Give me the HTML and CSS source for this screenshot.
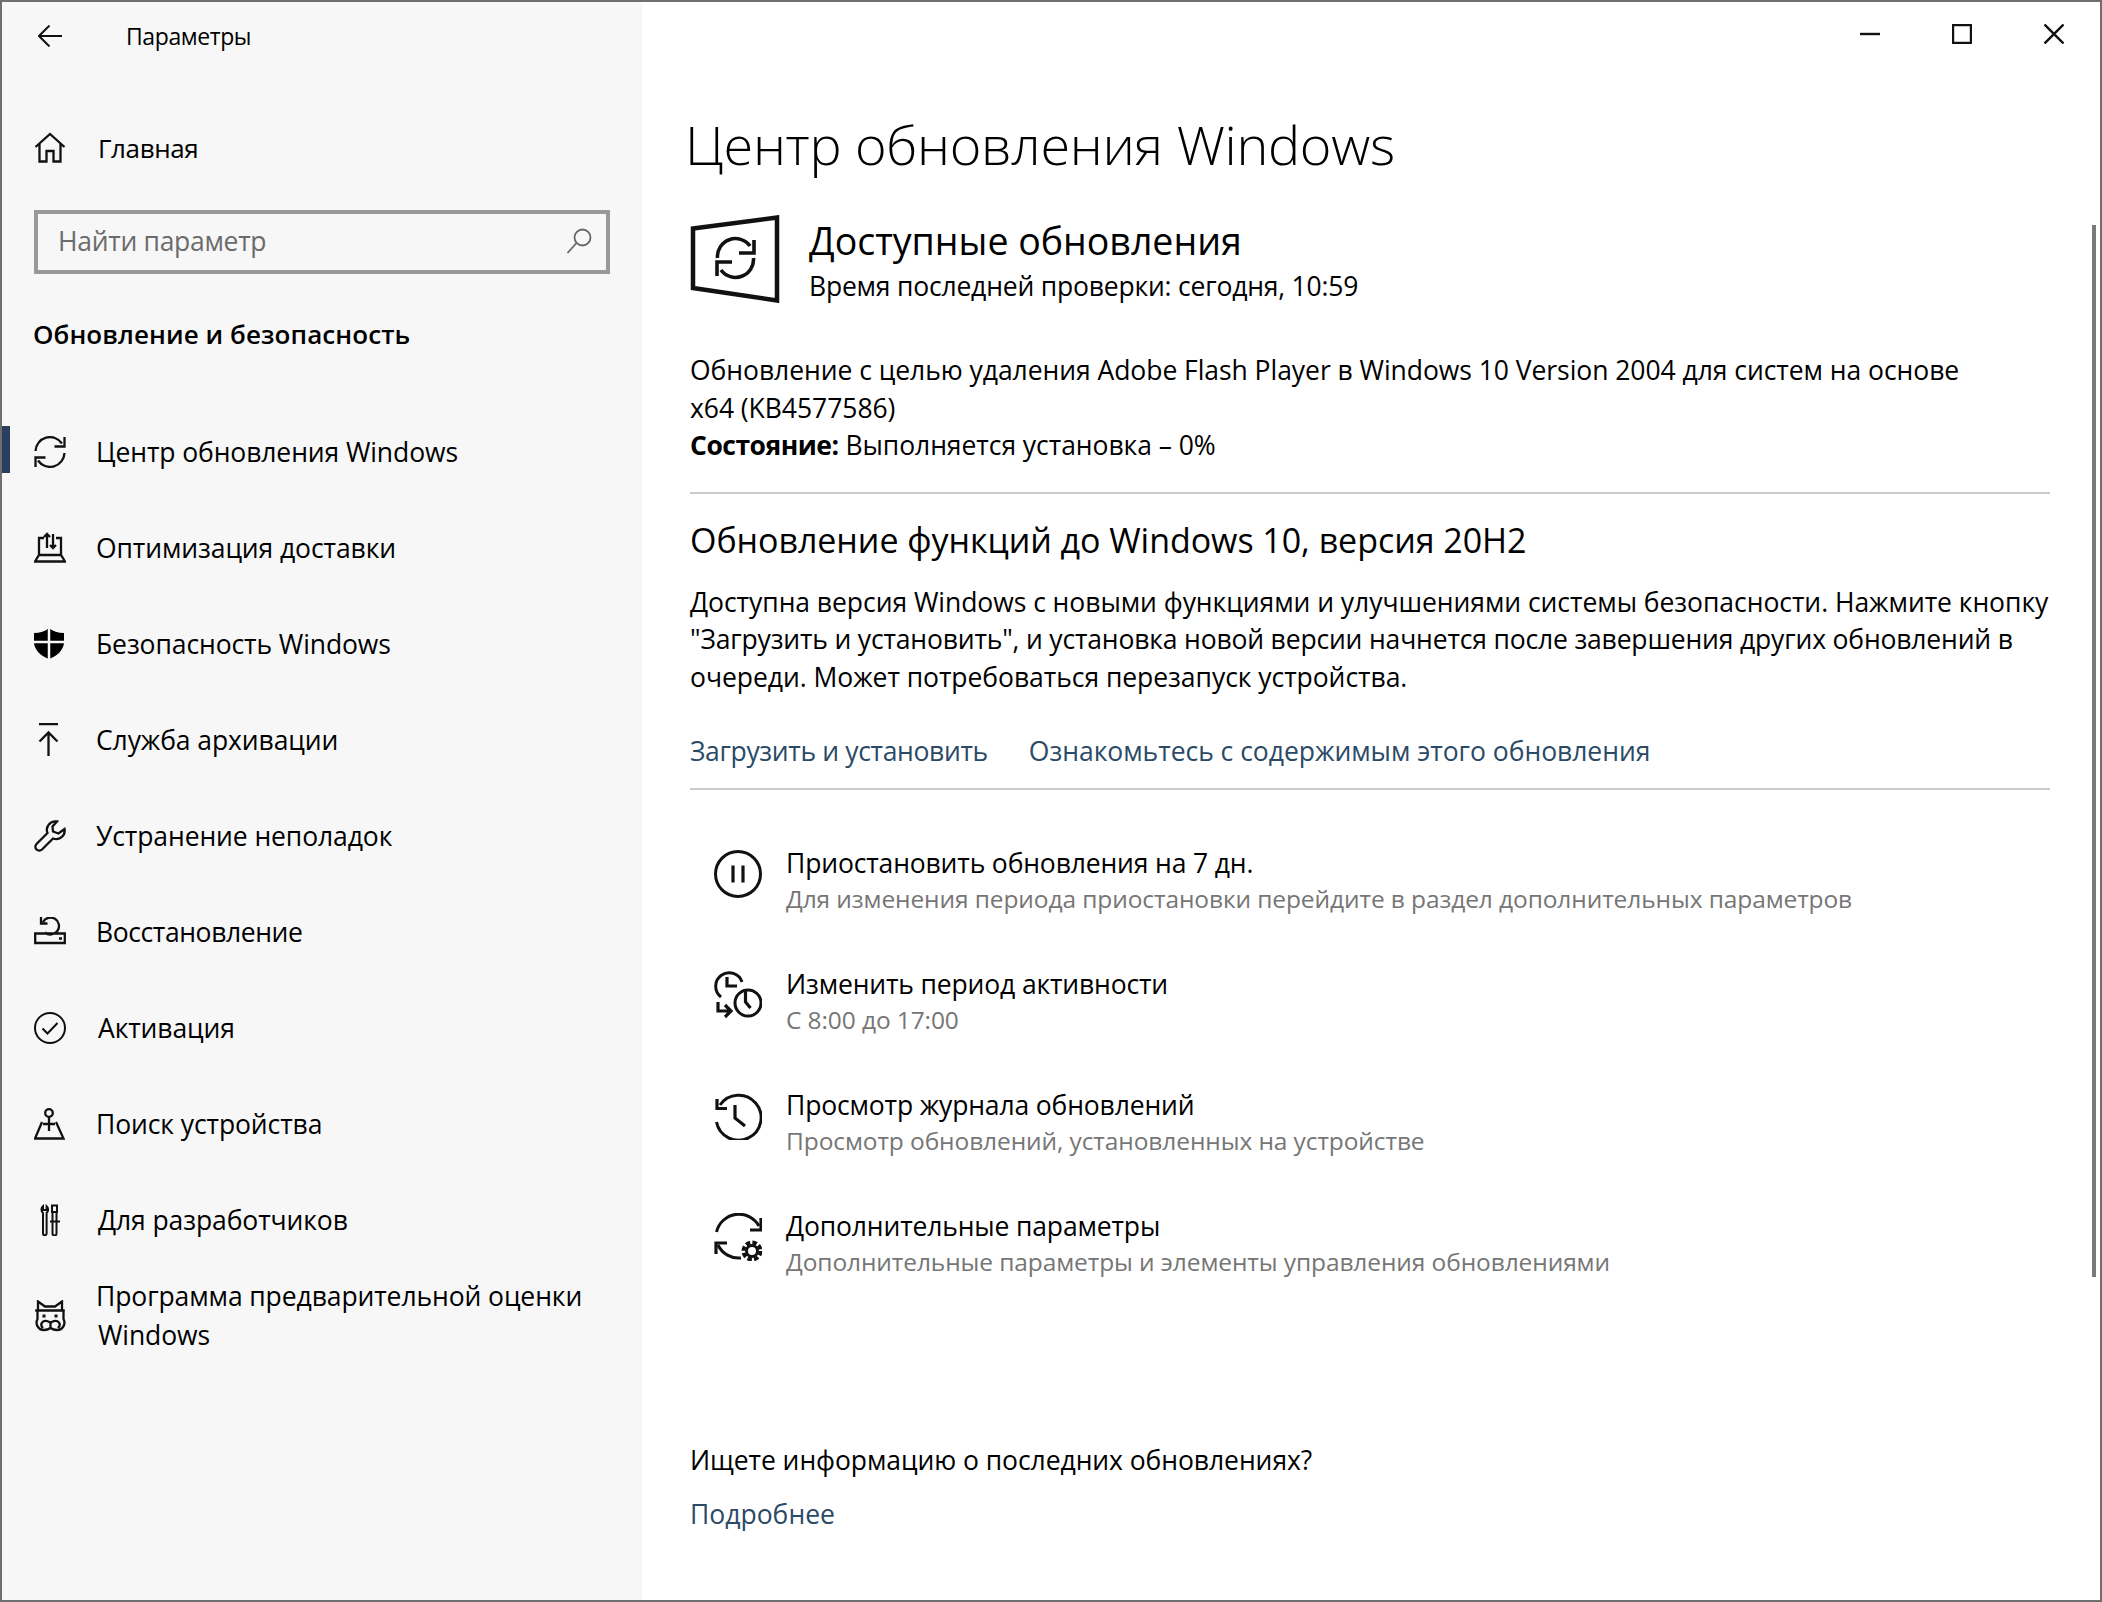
FILE: index.html
```html
<!DOCTYPE html>
<html lang="ru">
<head>
<meta charset="UTF-8">
<title>Параметры</title>
<link rel="stylesheet" href="styles.css">
</head>
<body>
<div class="window">
    <aside class="sidebar">
        <div class="app-title">
            <svg class="back-icon" width="24" height="22" viewBox="0 0 24 22"><path d="M24 11H1M11.500 .5L1 11l10.500 10.500"/></svg>
            <span>Параметры</span>
        </div>
        <div class="nav-row home-row">
            <svg class="nav-icon" width="32" height="32" viewBox="0 0 32 32"><path d="M1.500 15L16 2l14.500 13M5.500 12v17.500h7V19h7v10.500h7V12"/></svg>
            <span class="nav-text shifted home-text">Главная</span>
        </div>
        <div class="search-box">
            <span>Найти параметр</span>
            <svg class="search-icon" width="26" height="26" viewBox="0 0 26 26"><circle cx="16.500" cy="9.500" r="8"/><path d="M10.500 15L1.500 25"/></svg>
        </div>
        <h2 class="side-heading">Обновление и безопасность</h2>
        <nav>
            <div class="nav-row active">
                <svg class="nav-icon" width="32" height="32" viewBox="0 0 32 32"><path d="M1.500 15A14.500 14.500 0 0 1 28 7.500M30.500 1v9.500H20.500M30.500 17A14.500 14.500 0 0 1 4 24.500M1.500 31v-9.500h10"/></svg>
                <span class="nav-text">Центр обновления Windows</span>
            </div>
            <div class="nav-row">
                <svg class="nav-icon" width="32" height="32" viewBox="0 0 32 32"><path d="M10 6H5v17M22 6h5v17M5 23h22l4 6.500H1zM13 16V2M10 5l3-3 3 3M19 2v14M16 13l3 3 3-3"/></svg>
                <span class="nav-text">Оптимизация доставки</span>
            </div>
            <div class="nav-row">
                <svg class="nav-icon" width="32" height="32" viewBox="0 0 32 32"><path class="solid" d="M15 0C11 3.500 6 5 0 5v9c0 8 7 14 15 17 8-3 15-9 15-17V5c-6 0-11-1.500-15-5z"/><path class="cut" d="M15 0v32M0 14h30"/></svg>
                <span class="nav-text">Безопасность Windows</span>
            </div>
            <div class="nav-row">
                <svg class="nav-icon" width="32" height="34" viewBox="0 0 32 34"><path d="M5 1.200h19M14.500 33V9.500M5.500 18.500l9-9 9 9"/></svg>
                <span class="nav-text">Служба архивации</span>
            </div>
            <div class="nav-row">
                <svg class="nav-icon" width="32" height="32" viewBox="0 0 32 32"><path d="M23 1.500a8.500 8.500 0 0 0-9.500 11.500L2.500 24a3.800 3.800 0 0 0 5.500 5.500L19 18.500A8.500 8.500 0 0 0 30.500 9l-6 4.500-5.500-2-.5-5z"/></svg>
                <span class="nav-text">Устранение неполадок</span>
            </div>
            <div class="nav-row">
                <svg class="nav-icon" width="32" height="30" viewBox="0 0 32 30"><path d="M1.200 16.500h29.600V26H1.200zM9 5A8.500 8.500 0 1 1 11 15.500M7 0v6.500h6.500M25 21.500h3"/></svg>
                <span class="nav-text tight">Восстановление</span>
            </div>
            <div class="nav-row">
                <svg class="nav-icon thin" width="32" height="32" viewBox="0 0 32 32"><circle cx="16" cy="16" r="15"/><path d="M8.500 16.500l5 5 10-10.500"/></svg>
                <span class="nav-text shifted">Активация</span>
            </div>
            <div class="nav-row">
                <svg class="nav-icon" width="32" height="32" viewBox="0 0 32 32"><circle cx="15" cy="5" r="3.800"/><path d="M15 9v14M9 16h12M8 14L1 30.500h28.500L22 14"/></svg>
                <span class="nav-text">Поиск устройства</span>
            </div>
            <div class="nav-row">
                <svg class="nav-icon thin" width="32" height="32" viewBox="0 0 32 32"><path d="M9 2.200a4.500 4.500 0 0 0 0 6.800v20.500a1.800 1.800 0 0 0 3.600 0V9a4.500 4.500 0 0 0 0-6.800v3.800H9zM18 1.500h5v6.500h-5zM18.500 8v21.500a2 2 0 0 0 4 0V8M16 17.500h10"/></svg>
                <span class="nav-text shifted">Для разработчиков</span>
            </div>
            <div class="nav-row insider-row">
                <svg class="nav-icon" width="32" height="32" viewBox="0 0 32 32"><path d="M4 10V1.500L11 6.500h10l7-5V10M1.200 10.500h29.600M3.500 11v8c-2.500 5 .5 11 6.500 11 3 0 5-1 6.500-2 1.500 1 3.500 2 6.500 2 6 0 9-6 6.500-11v-8M9 28c-4-4 0-8 4-7l3.500 1.500L20 21c4-1 8 3 4 7M16.500 22.500V28"/><path class="dots" d="M10 14.500v3M22 14.500v3"/></svg>
                <span class="nav-text insider-text">Программа предварительной оценки <span class="shifted">Windows</span></span>
            </div>
        </nav>
    </aside>

    <main class="content">
        <div class="caption">
            <svg class="cap-icon" width="20" height="20" viewBox="0 0 20 20"><path d="M0 10h20"/></svg>
            <svg class="cap-icon" width="20" height="20" viewBox="0 0 20 20"><path d="M1 1h18v18H1z"/></svg>
            <svg class="cap-icon" width="20" height="20" viewBox="0 0 20 20"><path d="M.5 .5l19 19M19.500 .5l-19 19"/></svg>
        </div>

        <h1>Центр обновления Windows</h1>

        <div class="status">
            <svg class="status-icon" width="90" height="88" viewBox="0 0 90 88"><path d="M3 13.500L87 2.500v83L3 73z"/><path class="inner" d="M27.500 43A18 18 0 0 1 60 31M64 25v13H49M63.500 43A18 18 0 0 1 31 55M27 61V47h15"/></svg>
            <div class="status-text">
                <div class="status-title">Доступные обновления</div>
                <div class="status-sub">Время последней проверки: сегодня, 10:59</div>
            </div>
        </div>

        <p class="para first">Обновление с целью удаления Adobe Flash Player в Windows 10 Version 2004 для систем на основе<br>x64 (KB4577586)<br><b>Состояние:</b> Выполняется установка – 0%</p>
        <hr class="rule r1">

        <h2 class="feature">Обновление функций до Windows 10, версия 20H2</h2>
        <p class="para second">Доступна версия Windows с новыми функциями и улучшениями системы безопасности. Нажмите кнопку<br><span class="squeeze">"Загрузить и установить", и установка новой версии начнется после завершения других обновлений в</span><br>очереди. Может потребоваться перезапуск устройства.</p>
        <div class="links">
            <a>Загрузить и установить</a>
            <a>Ознакомьтесь с содержимым этого обновления</a>
        </div>
        <hr class="rule r2">

        <div class="options">
            <div class="option">
                <svg class="opt-icon" width="48" height="48" viewBox="0 0 48 48"><circle cx="24" cy="24" r="22.500"/><path class="bold" d="M19 15.500v17M29 15.500v17"/></svg>
                <div>
                    <div class="opt-title">Приостановить обновления на 7 дн.</div>
                    <div class="opt-sub">Для изменения периода приостановки перейдите в раздел дополнительных параметров</div>
                </div>
            </div>
            <div class="option">
                <svg class="opt-icon" width="48" height="48" viewBox="0 0 48 48"><path d="M7 26A13.500 13.500 0 1 1 28 11"/><circle cx="34" cy="32" r="13"/><path class="bold" d="M13 6v9h10M31.500 20v11l5 6M4 31v9h12M11 34l6 6-6 6"/></svg>
                <div>
                    <div class="opt-title">Изменить период активности</div>
                    <div class="opt-sub">С 8:00 до 17:00</div>
                </div>
            </div>
            <div class="option">
                <svg class="opt-icon" width="48" height="48" viewBox="0 0 48 48"><path d="M6 13A22.500 22.500 0 1 1 2.500 30"/><path class="bold" d="M3 7v9.500h10M21 13v13l10 8"/></svg>
                <div>
                    <div class="opt-title">Просмотр журнала обновлений</div>
                    <div class="opt-sub">Просмотр обновлений, установленных на устройстве</div>
                </div>
            </div>
            <div class="option">
                <svg class="opt-icon" width="48" height="48" viewBox="0 0 48 48"><path d="M2.500 19A23 23 0 0 1 45 13M27 45A23 23 0 0 1 4 32"/><path class="bold" d="M47 5v12H36M2 41V30h11"/><circle cx="38" cy="38" r="5.500"/><circle class="gear" cx="38" cy="38" r="8.500"/></svg>
                <div>
                    <div class="opt-title">Дополнительные параметры</div>
                    <div class="opt-sub">Дополнительные параметры и элементы управления обновлениями</div>
                </div>
            </div>
        </div>

        <div class="question">Ищете информацию о последних обновлениях?</div>
        <a class="more">Подробнее</a>
        <div class="scrollbar"></div>
    </main>
</div>
</body>
</html>
```

FILE: styles.css
```css
html, body {
    margin: 0;
    padding: 0;
    background: #fff;
}
body {
    font-family: "Open Sans", "Noto Sans", sans-serif;
    font-size: 26.5px;
    color: #000;
}
svg {
    display: block;
    flex: none;
    fill: none;
    stroke: #111;
}
.window {
    box-sizing: border-box;
    width: 2102px;
    height: 1602px;
    border: 2px solid #6f6f6f;
    display: flex;
    overflow: hidden;
}

/* left column */
.sidebar {
    width: 640px;
    flex: none;
    background: #f7f7f7;
}
.app-title {
    height: 68px;
    display: flex;
    align-items: center;
    padding-left: 36px;
    font-size: 23px;
    letter-spacing: -0.4px;
}
.app-title span {
    margin-left: 64px;
}
.back-icon {
    stroke-width: 2;
}
.nav-row {
    display: flex;
    align-items: center;
    min-height: 96px;
    padding-left: 32px;
    position: relative;
    letter-spacing: -0.1px;
}
.home-row {
    margin-top: 30px;
}
.home-text {
    font-size: 26px;
    letter-spacing: -0.4px;
}
.nav-icon {
    stroke-width: 2.3;
    margin-right: 30px;
}
.nav-icon.thin {
    stroke-width: 2;
}
.nav-icon .solid {
    fill: #000;
    stroke: none;
}
.nav-icon .cut {
    stroke: #f7f7f7;
    stroke-width: 2.5;
}
.nav-icon .dots {
    stroke-width: 3;
}
.nav-text {
    line-height: 39px;
    width: 520px;
}
.nav-text.tight {
    letter-spacing: -0.4px;
}
.insider-text {
    margin-top: -1px;
}
.shifted {
    margin-left: 2px;
    display: inline-block;
}
.active::before {
    content: "";
    position: absolute;
    left: 0;
    top: 22px;
    width: 8px;
    height: 47px;
    background: #2b3f5c;
}
.search-box {
    box-sizing: border-box;
    width: 576px;
    height: 64px;
    margin: 14px 0 0 32px;
    border: 4px solid #999;
    display: flex;
    align-items: center;
    justify-content: space-between;
    padding: 0 14px 2px 20px;
    color: #6b6b6b;
    letter-spacing: -0.3px;
}
.search-icon {
    stroke: #666;
    stroke-width: 1.8;
    margin-bottom: 1px;
}
.side-heading {
    margin: 40px 0 50px 31px;
    font-size: 26px;
    line-height: 40px;
    font-weight: 600;
    letter-spacing: 0.08px;
}

/* right column */
.content {
    flex: 1;
    padding: 0 50px 0 48px;
    position: relative;
}
.caption {
    height: 64px;
    display: flex;
    align-items: center;
    justify-content: flex-end;
    gap: 72px;
    margin-right: -14px;
}
.cap-icon {
    stroke-width: 2.4;
}
h1 {
    margin: 42px 0 0 -5px;
    font-size: 54px;
    line-height: 72px;
    font-weight: 300;
    letter-spacing: -0.3px;
}
.status {
    display: flex;
    margin-top: 35px;
}
.status-icon {
    stroke-width: 4.5;
    margin-right: 29px;
}
.status-icon .inner {
    stroke-width: 3.6;
}
.status-title {
    font-size: 37.5px;
    line-height: 52px;
}
.status-sub {
    line-height: 38px;
    letter-spacing: -0.2px;
}
.para {
    line-height: 37.5px;
    white-space: nowrap;
    margin: 0;
    letter-spacing: -0.05px;
}
.para.first {
    margin-top: 47px;
}
.para b {
    font-weight: 700;
    letter-spacing: -0.5px;
}
.para.second {
    margin-top: 19px;
}
.squeeze {
    letter-spacing: -0.17px;
}
.rule {
    border: 0;
    height: 2px;
    background: #ccc;
    margin: 0;
}
.r1 {
    margin-top: 27px;
}
.r2 {
    margin-top: 17px;
}
.feature {
    margin: 21px 0 0;
    font-size: 34px;
    line-height: 50px;
    font-weight: 400;
    letter-spacing: -0.05px;
}
.links {
    display: flex;
    gap: 41px;
    margin-top: 35px;
    line-height: 40px;
    letter-spacing: -0.03px;
}
.links a:first-child {
    letter-spacing: -0.35px;
}
a {
    color: #2b4a66;
}
.options {
    margin-top: 56px;
    padding-left: 24px;
    display: flex;
    flex-direction: column;
    gap: 51px;
}
.option {
    display: flex;
    gap: 24px;
    line-height: 35px;
}
.opt-icon {
    stroke-width: 3;
    margin-top: 4px;
}
.opt-icon .bold {
    stroke-width: 3.2;
}
.opt-icon .gear {
    stroke-width: 4;
    stroke-dasharray: 4.5 2.2;
}
.opt-title {
    letter-spacing: -0.15px;
}
.opt-sub {
    color: #767676;
    font-size: 24.5px;
    letter-spacing: -0.1px;
}
.question {
    margin-top: 161px;
    line-height: 40px;
    letter-spacing: -0.07px;
}
.more {
    display: block;
    margin-top: 14px;
    line-height: 40px;
}
.scrollbar {
    position: absolute;
    right: 4px;
    top: 223px;
    width: 4px;
    height: 1052px;
    background: #7a7a7a;
}
```
